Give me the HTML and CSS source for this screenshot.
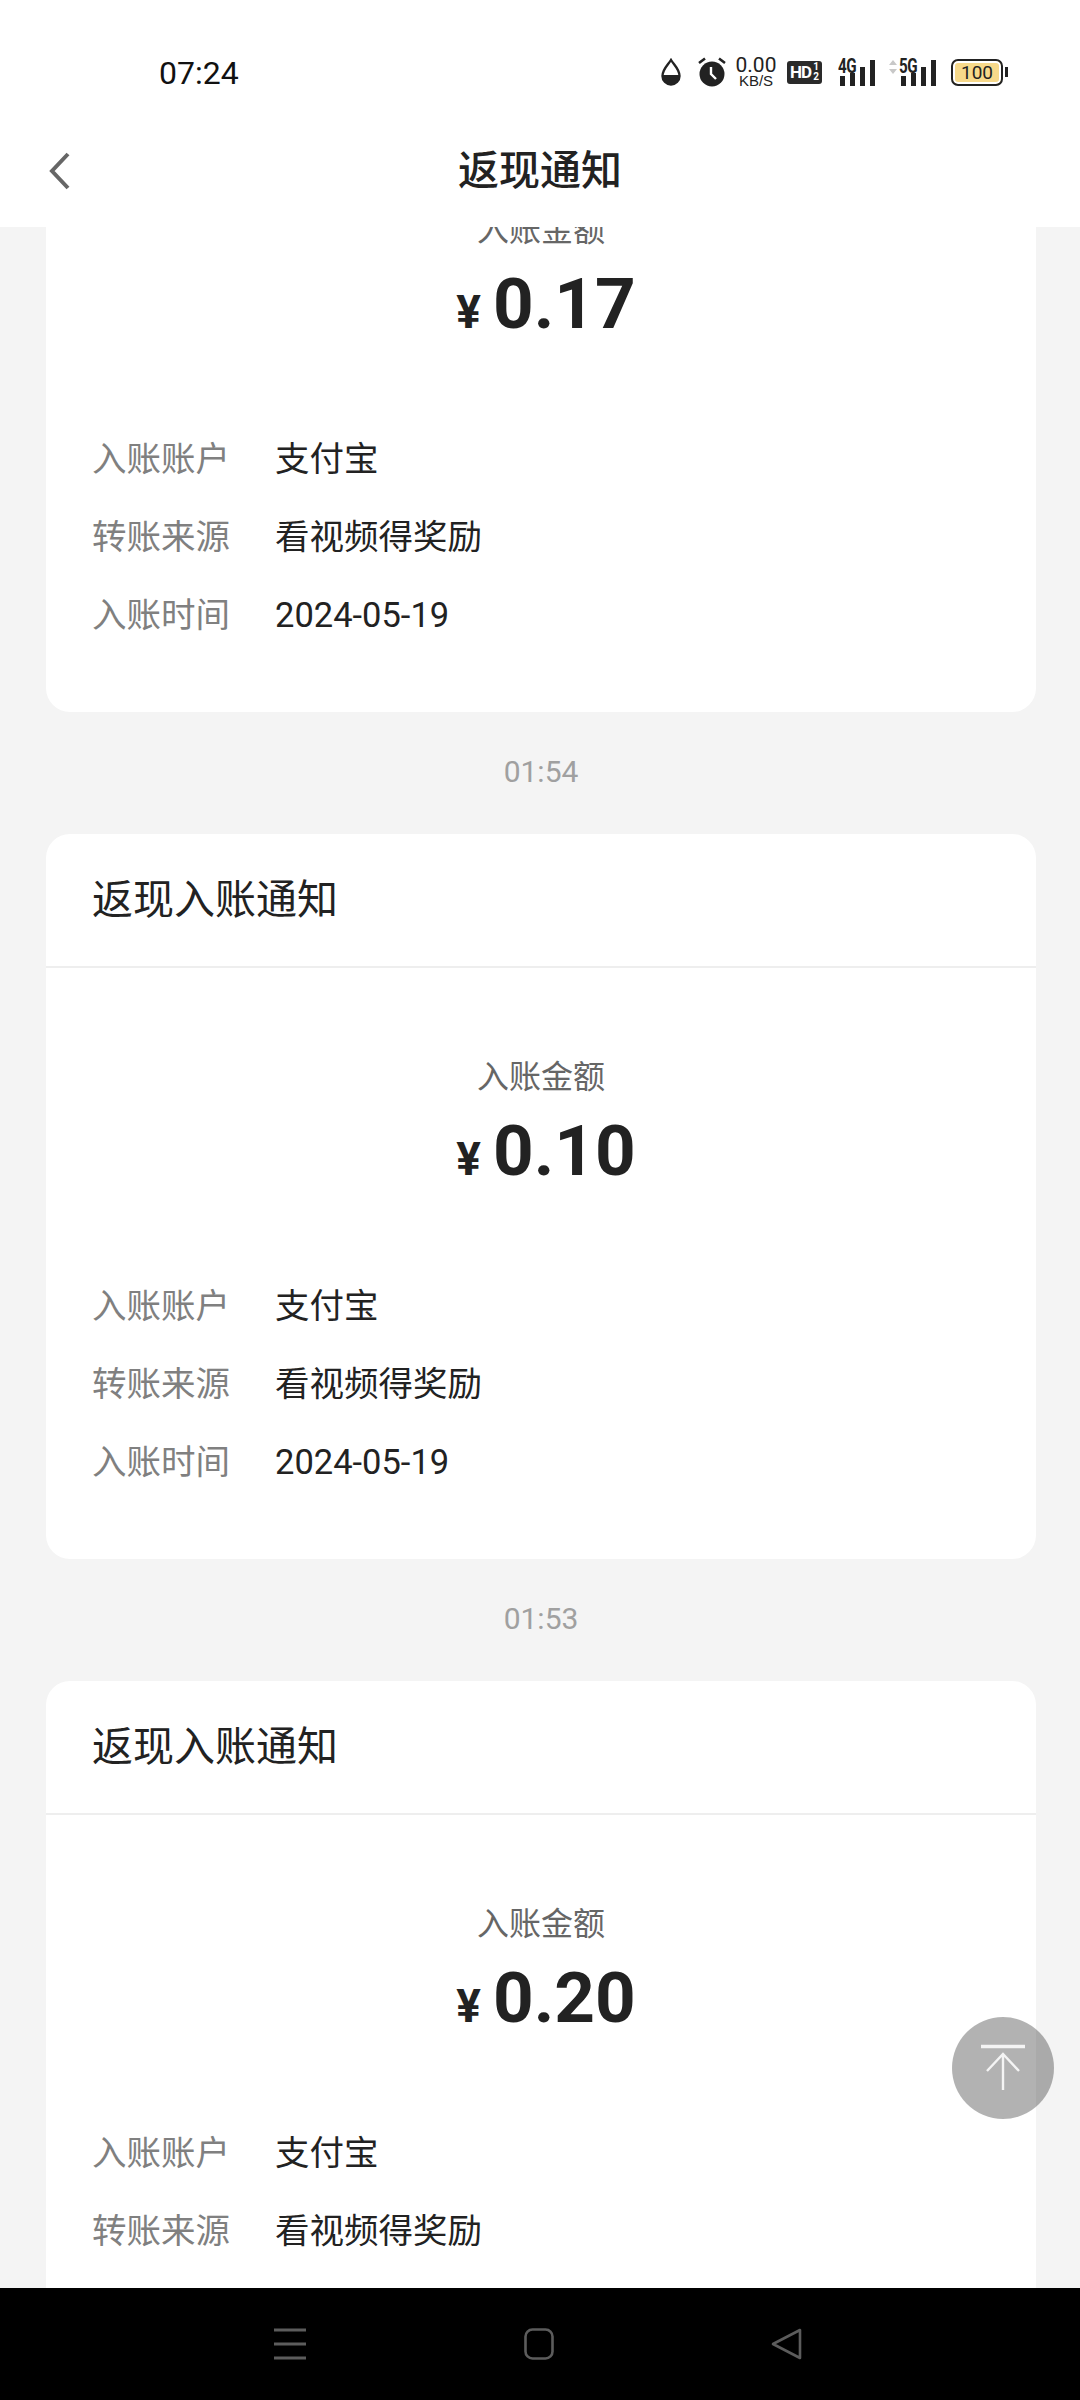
FILE: index.html
```html
<!DOCTYPE html>
<html lang="zh-CN">
<head>
    <meta charset="UTF-8">
    <meta name="viewport" content="width=device-width, initial-scale=1.0">
    <title>返现通知</title>
    <link rel="stylesheet" href="styles.css">
</head>
<body>
    <div class="page">
        <div class="status-bar">
            <div class="clock">07:24</div>
            <div class="status-icons">
                <svg class="icon-drop" width="20" height="28" viewBox="0 0 20 28">
                    <path d="M10 2 C7 7 1.5 11 1.5 18 A8.5 8.5 0 0 0 18.5 18 C18.5 11 13 7 10 2 Z" fill="none" stroke="#222" stroke-width="2.4"/>
                    <path d="M1.5 17 H18.5 A8.5 9.5 0 0 1 1.5 17 Z" fill="#222"/>
                </svg>
                <svg class="icon-alarm" width="28" height="30" viewBox="0 0 28 30">
                    <circle cx="14" cy="17" r="12.5" fill="#222"/>
                    <path d="M13 10 V17 L18 22" fill="none" stroke="#fff" stroke-width="2.4"/>
                    <path d="M1 6 L7 1.5 M27 6 L21 1.5" stroke="#222" stroke-width="2.6"/>
                </svg>
                <div class="speed">
                    <span class="speed-value">0.00</span>
                    <span class="speed-unit">KB/S</span>
                </div>
                <div class="hd-badge">HD<span class="hd-frac">1<br>2</span></div>
                <div class="signal">
                    <span class="signal-label">4G</span>
                    <svg width="39" height="27" viewBox="0 0 39 27">
                        <path d="M2 17h5v10H2z M12 14h5v13h-5z M22 8h5v19h-5z M32 1h5v26h-5z" fill="#222"/>
                    </svg>
                </div>
                <div class="signal signal-5g">
                    <svg class="updown" width="10" height="16" viewBox="0 0 10 16">
                        <path d="M5 1 L9 6 H1 Z M5 15 L9 10 H1 Z" fill="#c8c8c8"/>
                    </svg>
                    <span class="signal-label">5G</span>
                    <svg width="39" height="27" viewBox="0 0 39 27">
                        <path d="M2 17h5v10H2z M12 14h5v13h-5z M22 8h5v19h-5z M32 1h5v26h-5z" fill="#222"/>
                    </svg>
                </div>
                <div class="battery">
                    <div class="battery-body">100</div>
                    <div class="battery-cap"></div>
                </div>
            </div>
        </div>

        <header class="title-bar">
            <svg class="back" width="24" height="40" viewBox="0 0 24 40">
                <path d="M20 3 L4 20 L20 37" fill="none" stroke="#666" stroke-width="4"/>
            </svg>
            <h1>返现通知</h1>
        </header>

        <main class="content">
            <div class="list">
                <section class="card">
                    <div class="card-title">返现入账通知</div>
                    <div class="card-body">
                        <div class="amount-label">入账金额</div>
                        <div class="amount"><span class="yen">¥</span>0.17</div>
                        <div class="row"><span class="key">入账账户</span><span class="val">支付宝</span></div>
                        <div class="row"><span class="key">转账来源</span><span class="val">看视频得奖励</span></div>
                        <div class="row"><span class="key">入账时间</span><span class="val">2024-05-19</span></div>
                    </div>
                </section>
                <div class="time">01:54</div>
                <section class="card">
                    <div class="card-title">返现入账通知</div>
                    <div class="card-body">
                        <div class="amount-label">入账金额</div>
                        <div class="amount"><span class="yen">¥</span>0.10</div>
                        <div class="row"><span class="key">入账账户</span><span class="val">支付宝</span></div>
                        <div class="row"><span class="key">转账来源</span><span class="val">看视频得奖励</span></div>
                        <div class="row"><span class="key">入账时间</span><span class="val">2024-05-19</span></div>
                    </div>
                </section>
                <div class="time">01:53</div>
                <section class="card">
                    <div class="card-title">返现入账通知</div>
                    <div class="card-body">
                        <div class="amount-label">入账金额</div>
                        <div class="amount"><span class="yen">¥</span>0.20</div>
                        <div class="row"><span class="key">入账账户</span><span class="val">支付宝</span></div>
                        <div class="row"><span class="key">转账来源</span><span class="val">看视频得奖励</span></div>
                        <div class="row"><span class="key">入账时间</span><span class="val">2024-05-19</span></div>
                    </div>
                </section>
            </div>
            <button class="to-top">
                <svg width="46" height="48" viewBox="0 0 46 48">
                    <path d="M1 2.5 H45" fill="none" stroke="#f4f4f4" stroke-width="3.5"/>
                    <path d="M23 46 V10 M7 27 L23 10 L39 27" fill="none" stroke="#f4f4f4" stroke-width="2.4"/>
                </svg>
            </button>
        </main>

        <nav class="nav-bar">
            <svg width="32" height="32" viewBox="0 0 32 32">
                <path d="M0 2 H32 M0 16 H32 M0 30 H32" stroke="#5c5c5c" stroke-width="3"/>
            </svg>
            <svg width="30" height="32" viewBox="0 0 30 32">
                <rect x="1.5" y="1.5" width="27" height="29" rx="7" fill="none" stroke="#5c5c5c" stroke-width="2.6"/>
            </svg>
            <svg width="32" height="32" viewBox="0 0 32 32">
                <path d="M29 2 V30 L2 16 Z" fill="none" stroke="#5c5c5c" stroke-width="2.6" stroke-linejoin="round"/>
            </svg>
        </nav>
    </div>
</body>
</html>
```

FILE: styles.css
```css
* {
    margin: 0;
    padding: 0;
    box-sizing: border-box;
}

body {
    font-family: Roboto, "Noto Sans CJK SC", sans-serif;
    background: #f4f4f4;
    color: #222;
}

.page {
    width: 1080px;
    height: 2400px;
    display: flex;
    flex-direction: column;
    overflow: hidden;
}

.status-bar {
    height: 130px;
    flex-shrink: 0;
    background: #fff;
    display: flex;
    align-items: flex-start;
    justify-content: space-between;
    padding: 55px 72px 0 159px;
}

.clock {
    font-size: 32px;
    line-height: 36px;
    color: #111;
}

.status-icons {
    display: flex;
    align-items: center;
    height: 32px;
    margin-top: 1px;
}

.icon-drop {
    margin-right: 17px;
}

.icon-alarm {
    margin-right: 8px;
}

.speed {
    width: 44px;
    display: flex;
    flex-direction: column;
    align-items: center;
    margin-right: 9px;
    color: #222;
}

.speed-value {
    font-size: 21px;
    line-height: 18px;
}

.speed-unit {
    font-family: "Liberation Sans", sans-serif;
    font-size: 15px;
    line-height: 14px;
}

.hd-badge {
    width: 35px;
    height: 23px;
    border-radius: 3px;
    background: #2a2a2a;
    color: #fff;
    font-size: 17px;
    font-weight: 700;
    letter-spacing: -1px;
    display: flex;
    align-items: center;
    justify-content: center;
    margin-right: 16px;
}

.hd-frac {
    font-size: 10px;
    line-height: 10px;
    margin-left: 2px;
    letter-spacing: 0;
    text-align: center;
}

.signal {
    position: relative;
    width: 39px;
    height: 27px;
    margin-right: 11px;
}

.signal-label {
    position: absolute;
    left: 0;
    top: -1px;
    font-size: 20px;
    line-height: 16px;
    font-weight: 700;
    letter-spacing: -0.5px;
    transform: scaleX(0.76);
    transform-origin: left;
    color: #222;
}

.signal-5g {
    width: 50px;
    margin-right: 13px;
    display: flex;
    justify-content: flex-end;
}

.signal-5g .signal-label {
    left: 11px;
}

.updown {
    position: absolute;
    left: 0;
    top: 0;
}

.battery {
    display: flex;
    align-items: center;
}

.battery-body {
    width: 52px;
    height: 27px;
    border: 2px solid #222;
    border-radius: 7px;
    background: #f7d98a;
    box-shadow: inset 0 0 0 2px #fff;
    font-size: 19px;
    line-height: 23px;
    text-align: center;
    color: #222;
}

.battery-cap {
    width: 3px;
    height: 10px;
    margin-left: 2px;
    background: #222;
}

.title-bar {
    height: 97px;
    flex-shrink: 0;
    background: #fff;
    position: relative;
    z-index: 2;
    display: flex;
    justify-content: center;
    padding-top: 13px;
}

.title-bar h1 {
    font-size: 41px;
    line-height: 56px;
    font-weight: 500;
    color: #222;
}

.back {
    position: absolute;
    left: 48px;
    top: 21px;
}

.content {
    flex: 1;
    position: relative;
    overflow: hidden;
}

.list {
    margin-top: -240px;
    padding: 0 44px 0 46px;
}

.card {
    background: #fff;
    border-radius: 24px;
    height: 725px;
}

.card-title {
    height: 134px;
    padding-left: 46px;
    border-bottom: 2px solid #eeeeee;
    font-size: 41px;
    line-height: 133px;
    color: #222;
}

.card-body {
    padding: 85px 46px 0;
}

.amount-label {
    font-size: 32px;
    line-height: 48px;
    text-align: center;
    color: #666;
}

.amount {
    display: flex;
    justify-content: center;
    align-items: baseline;
    height: 90px;
    margin-top: 5px;
    margin-bottom: 71px;
    padding-left: 10px;
    font-size: 71px;
    line-height: 90px;
    font-weight: 700;
    color: #222;
}

.yen {
    font-size: 46px;
    margin-right: 12px;
}

.row {
    display: flex;
    height: 78px;
    line-height: 78px;
    font-size: 34.5px;
}

.key {
    width: 183px;
    color: #808080;
}

.val {
    color: #222;
}

.time {
    height: 122px;
    line-height: 120px;
    text-align: center;
    font-size: 30px;
    color: #a0a0a0;
}

.to-top {
    position: absolute;
    left: 952px;
    top: 1790px;
    width: 102px;
    height: 102px;
    border: none;
    border-radius: 50%;
    background: rgba(0, 0, 0, 0.3);
    display: flex;
    align-items: center;
    justify-content: center;
}

.nav-bar {
    height: 112px;
    flex-shrink: 0;
    background: #000;
    position: relative;
    z-index: 2;
    display: grid;
    grid-template-columns: 32px 30px 32px;
    justify-content: space-between;
    align-items: center;
    padding: 0 277px 0 274px;
}
```
